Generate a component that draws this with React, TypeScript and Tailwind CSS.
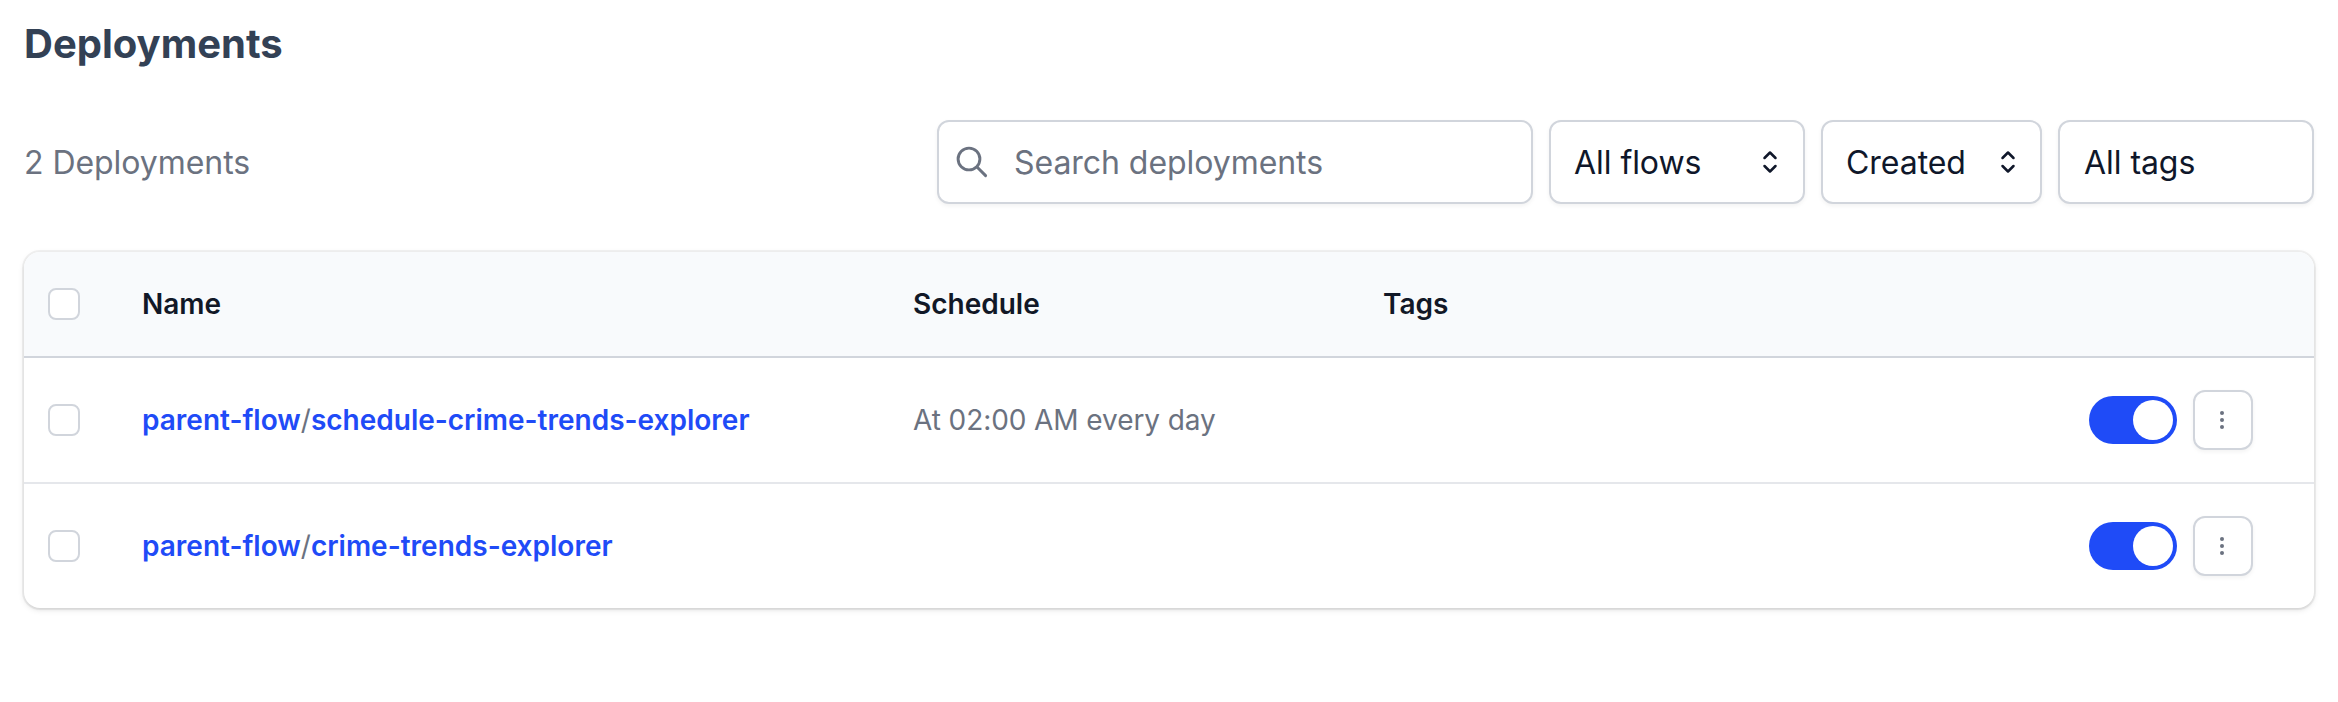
import React from "react";

const deployments = [
  { flow: "parent-flow", name: "schedule-crime-trends-explorer", schedule: "At 02:00 AM every day" },
  { flow: "parent-flow", name: "crime-trends-explorer", schedule: "" },
];

const columns = "grid grid-cols-[94px_771px_470px_1fr_auto] items-center pl-6";

function Checkbox({ label }: { label: string }) {
  return (
    <button
      role="checkbox"
      aria-checked="false"
      aria-label={label}
      className="block size-8 rounded-lg border-2 border-gray-300 bg-white"
    />
  );
}

function SearchIcon() {
  return (
    <svg viewBox="0 0 40 40" className="size-10 shrink-0 text-[#6b7280]" fill="none" stroke="currentColor" strokeWidth="2.9" strokeLinecap="round">
      <circle cx="16" cy="17" r="10.9" />
      <path d="M24 25 L32.6 33.6" />
    </svg>
  );
}

function UpDownIcon() {
  return (
    <svg viewBox="0 0 16 24" className="h-6 w-4 shrink-0" fill="none" stroke="currentColor" strokeWidth="2.5" strokeLinecap="round" strokeLinejoin="round">
      <path d="M2.5 8 L8 2.5 L13.5 8" />
      <path d="M2.5 16 L8 21.5 L13.5 16" />
    </svg>
  );
}

function Select({ label, className, arrows = true }: { label: string; className: string; arrows?: boolean }) {
  return (
    <button
      className={`flex h-[84px] items-center justify-between rounded-xl border-2 border-gray-300 bg-white text-[#0f172a] shadow-[0_2px_4px_rgba(0,0,0,0.05)] ${className}`}
    >
      <span className="pt-0.5 tracking-[-0.05px]">{label}</span>
      {arrows && <UpDownIcon />}
    </button>
  );
}

function Toggle() {
  return (
    <button role="switch" aria-checked="true" aria-label="Enabled" className="flex h-12 w-22 items-center justify-end rounded-full bg-[#1f4bf7] p-1">
      <span className="size-10 rounded-full bg-white" />
    </button>
  );
}

function MenuButton() {
  return (
    <button aria-label="More actions" className="flex size-15 items-center justify-center rounded-xl border-2 border-gray-300 bg-white shadow-[0_2px_4px_rgba(0,0,0,0.05)]">
      <svg viewBox="0 0 20 20" className="mr-0.5 size-5 text-[#6b7280]" fill="currentColor">
        <circle cx="10" cy="3" r="2" />
        <circle cx="10" cy="10" r="2" />
        <circle cx="10" cy="17" r="2" />
      </svg>
    </button>
  );
}

export default function App() {
  return (
    <main className="h-[702px] bg-white px-6 pt-4 font-['Inter',sans-serif] text-[#6b7280]">
      <h1 className="text-[40px] leading-[56px] font-bold text-[#334155]">Deployments</h1>

      <div className="mt-12 flex h-[84px] items-center gap-4 text-[32px] leading-[48px]">
        <p className="flex-1 pt-0.5 tracking-[-0.05px]">2 Deployments</p>
        <label className="flex h-[84px] w-[596px] items-center rounded-xl border-2 border-gray-300 bg-white pl-[14px] shadow-[0_2px_4px_rgba(0,0,0,0.05)]">
          <SearchIcon />
          <span className="ml-[21px] pt-0.5 tracking-[-0.05px]">Search deployments</span>
        </label>
        <Select label="All flows" className="w-[256px] pr-[25px] pl-[23px]" />
        <Select label="Created" className="w-[221px] pr-6 pl-[23px]" />
        <Select label="All tags" className="w-[256px] pl-6" arrows={false} />
      </div>

      <section className="mt-12 overflow-hidden rounded-2xl bg-white text-[28px] leading-10 shadow-[0_0_0_2px_rgba(0,0,0,0.05),0_2px_6px_rgba(0,0,0,0.1),0_2px_4px_-2px_rgba(0,0,0,0.1)]">
        <div className={`${columns} h-[106px] border-b-2 border-gray-300 bg-[#f8fafc] font-semibold text-[#111827]`}>
          <Checkbox label="Select all" />
          <span>Name</span>
          <span>Schedule</span>
          <span>Tags</span>
        </div>
        {deployments.map((d, i) => (
          <div key={d.name} className={`${columns} ${i === 0 ? "h-[126px] border-b-2 border-gray-200" : "h-[124px]"}`}>
            <Checkbox label={d.name} />
            <span>
              <a className="font-semibold text-[#1f4bf7]">{d.flow}</a>/<a className="font-semibold text-[#1f4bf7]">{d.name}</a>
            </span>
            <span className="tracking-[-0.08px]">{d.schedule}</span>
            <span />
            <div className="flex items-center gap-4 pr-[61px]">
              <Toggle />
              <MenuButton />
            </div>
          </div>
        ))}
      </section>
    </main>
  );
}
